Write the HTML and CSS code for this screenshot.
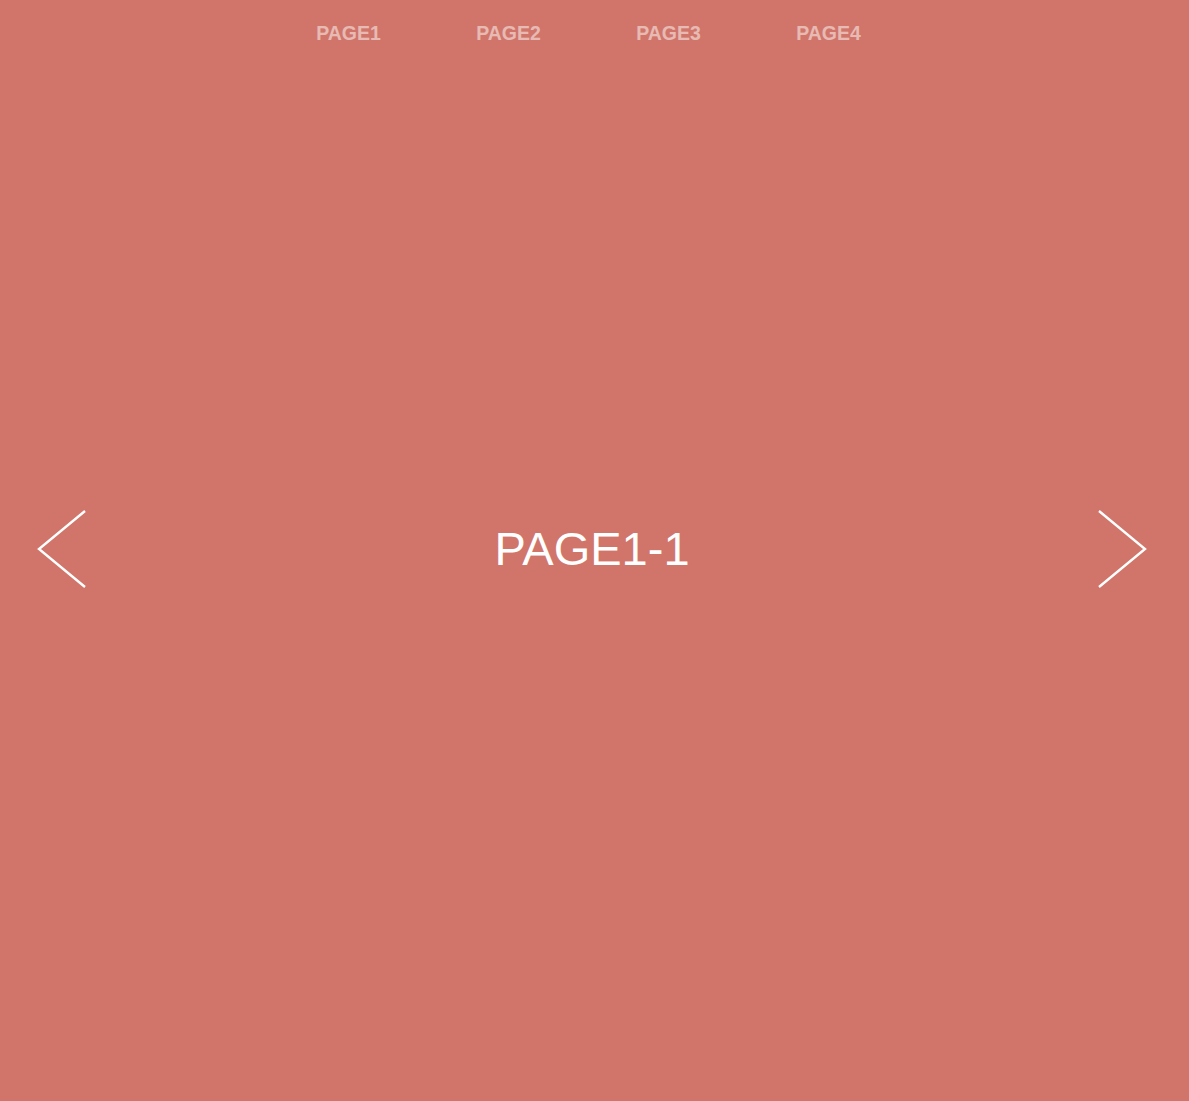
FILE: index.html
```html
<!DOCTYPE html>
<html>
<head>
<meta charset="utf-8">
<link rel="stylesheet" href="styles.css">
</head>
<body>
<div class="slider">
  <nav class="nav">
    <a class="nav-item">PAGE1</a>
    <a class="nav-item">PAGE2</a>
    <a class="nav-item">PAGE3</a>
    <a class="nav-item">PAGE4</a>
  </nav>
  <div class="slide">
    <button class="arrow arrow-prev" aria-label="previous">
      <svg width="50" height="80" viewBox="0 0 50 80"><path d="M48 2 L2 40 L48 78" fill="none" stroke="#fff" stroke-width="2.4"/></svg>
    </button>
    <div class="slide-title">PAGE1-1</div>
    <button class="arrow arrow-next" aria-label="next">
      <svg width="50" height="80" viewBox="0 0 50 80"><path d="M2 2 L48 40 L2 78" fill="none" stroke="#fff" stroke-width="2.4"/></svg>
    </button>
  </div>
</div>
</body>
</html>
```

FILE: styles.css
```css
html, body {
  margin: 0;
  padding: 0;
}
body {
  font-family: "Liberation Sans", Arial, sans-serif;
  background: #d1756a;
}
.slider {
  position: relative;
  height: 1101px;
  background: #d1756a;
}
.nav {
  position: absolute;
  top: 0;
  left: 0;
  right: 0;
  display: flex;
  justify-content: center;
  padding: 21px 12px 0 0;
}
.nav-item {
  width: 160px;
  text-align: center;
  font-size: 19.5px;
  font-weight: bold;
  line-height: 24px;
  color: rgba(255, 255, 255, 0.5);
  cursor: pointer;
}
.slide {
  height: 100%;
  display: flex;
  align-items: center;
  padding: 0 42px 0 37px;
  box-sizing: border-box;
}
.arrow {
  background: none;
  border: 0;
  padding: 0;
  display: flex;
  margin-top: -3px;
  cursor: pointer;
}
.slide-title {
  flex: 1;
  text-align: center;
  color: #fff;
  font-size: 47px;
  line-height: 56px;
  margin-top: -4px;
}
```
